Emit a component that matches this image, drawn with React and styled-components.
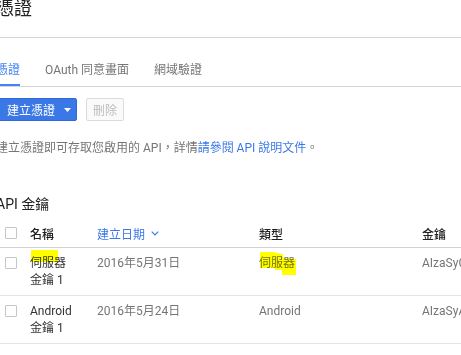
import styled, { createGlobalStyle } from "styled-components";

const GlobalStyle = createGlobalStyle`
  html, body {
    margin: 0;
    padding: 0;
    overflow: hidden;
    background: #fff;
  }
  body {
    font-family: Roboto, "Noto Sans CJK TC", sans-serif;
    font-size: 12px;
    color: #212121;
  }
`;

const rows = [
  {
    id: 1,
    name: "伺服器",
    date: "2016年5月31日",
    type: "伺服器",
    key: "AIzaSyC3kR8vQp1xLm0Zt7uWb2nYd5eHf9gJ4sA",
    marked: true,
  },
  {
    id: 2,
    name: "Android",
    date: "2016年5月24日",
    type: "Android",
    key: "AIzaSyAq7Lw2Xn9cVb4Tz1Mk8Ps0Rj6Hd3Fg5Ue",
    marked: false,
  },
];

export default function App() {
  return (
    <>
      <GlobalStyle />
      <Page>
        <Header>
          <Title>憑證</Title>
        </Header>

        <TabBar>
          <Tab $active>憑證</Tab>
          <Tab>OAuth 同意畫面</Tab>
          <Tab>網域驗證</Tab>
        </TabBar>

        <Toolbar>
          <PrimaryButton>
            建立憑證
            <svg width="7" height="4" viewBox="0 0 7 4">
              <path d="M0 0 L7 0 L3.5 4 Z" fill="#fff" />
            </svg>
          </PrimaryButton>
          <GhostButton disabled>刪除</GhostButton>
        </Toolbar>

        <Description>
          建立憑證即可存取您啟用的 API，詳情<DocLink>請參閱 API 說明文件</DocLink>。
        </Description>

        <SectionTitle>API 金鑰</SectionTitle>

        <Table>
          <HeadRow>
            <CheckCell>
              <Checkbox />
            </CheckCell>
            <HeadCell>名稱</HeadCell>
            <HeadCell $sort>
              建立日期
              <svg width="8" height="5" viewBox="0 0 8 5">
                <path d="M0.7 0.7 L4 4 L7.3 0.7" fill="none" stroke="#3b78e7" strokeWidth="1.2" />
              </svg>
            </HeadCell>
            <HeadCell>類型</HeadCell>
            <HeadCell>金鑰</HeadCell>
          </HeadRow>

          {rows.map((row) => (
            <Row key={row.id}>
              <CheckCell $top>
                <Checkbox />
              </CheckCell>
              <NameCell>
                {row.marked && <NameMark />}
                <div>{row.name}</div>
                <div>金鑰 1</div>
              </NameCell>
              <Cell>{row.date}</Cell>
              <Cell>
                {row.marked && (
                  <TypeMark width="37" height="24" viewBox="0 0 37 24">
                    <path
                      d="M0 0 L15 0 L16 1 L23 2 L23 6 L36 7 L36 23 L22 23 L22 18 L15 18 L15 16 L0 16 Z"
                      fill="#ffff00"
                    />
                  </TypeMark>
                )}
                {row.type}
              </Cell>
              <KeyCell>{row.key}</KeyCell>
            </Row>
          ))}
        </Table>
      </Page>
    </>
  );
}

const Page = styled.div`
  margin-left: -4px;
  width: 480px;
`;

const Header = styled.div`
  height: 37px;
  border-bottom: 1px solid #d6d6d6;
`;

const Title = styled.h1`
  margin: 0;
  font-size: 18px;
  line-height: 18px;
  font-weight: 400;
  color: #212121;
`;

const TabBar = styled.div`
  display: flex;
  align-items: flex-end;
  gap: 25px;
  height: 48px;
  border-bottom: 1px solid #d6d6d6;
`;

const Tab = styled.div`
  line-height: 16px;
  padding-bottom: 6px;
  border-bottom: 2px solid ${(p) => (p.$active ? "#4285f4" : "transparent")};
  color: ${(p) => (p.$active ? "#4285f4" : "#757575")};
  font-size: 12px;
`;

const Toolbar = styled.div`
  display: flex;
  gap: 9px;
  margin-top: 11px;
`;

const PrimaryButton = styled.button`
  display: flex;
  align-items: center;
  gap: 9px;
  height: 23px;
  width: 81px;
  padding: 0 0 0 10px;
  border: 1px solid #3367d6;
  border-radius: 2px;
  background: #3b78e7;
  color: #fff;
  font: inherit;
  font-size: 12px;
`;

const GhostButton = styled.button`
  height: 23px;
  width: 38px;
  padding: 0;
  border: 1px solid #dcdcdc;
  border-radius: 2px;
  background: #fafafa;
  color: #bdbdbd;
  font: inherit;
  font-size: 12px;
`;

const Description = styled.p`
  margin: 19px 0 0;
  line-height: 16px;
  color: #757575;
  white-space: nowrap;
`;

const DocLink = styled.a`
  color: #3b78e7;
  text-decoration: none;
`;

const SectionTitle = styled.h2`
  margin: 38px 0 0;
  font-size: 14px;
  line-height: 20px;
  font-weight: 400;
  color: #212121;
`;

const Table = styled.div`
  margin-top: 5px;
`;

const columns = "34px 67px 162px 163px 1fr";

const HeadRow = styled.div`
  display: grid;
  grid-template-columns: ${columns};
  align-items: center;
  height: 28px;
  border-bottom: 1px solid #d2d2d2;
`;

const HeadCell = styled.div`
  display: flex;
  align-items: center;
  gap: 6px;
  color: ${(p) => (p.$sort ? "#3b78e7" : "#212121")};
  font-weight: ${(p) => (p.$sort ? 400 : 500)};
  white-space: nowrap;
`;

const Row = styled.div`
  display: grid;
  grid-template-columns: ${columns};
  align-items: start;
  height: 47px;
  border-bottom: 1px solid #e4e4e4;
`;

const CheckCell = styled.div`
  padding-left: 9px;
  padding-top: ${(p) => (p.$top ? "9px" : "0")};
  display: flex;
`;

const Checkbox = styled.span`
  display: block;
  width: 10px;
  height: 10px;
  border: 1px solid #c6c6c6;
  border-radius: 1px;
  background: #fff;
`;

const Cell = styled.div`
  position: relative;
  padding-top: 7px;
  line-height: 17px;
  color: #757575;
  white-space: nowrap;
`;

const NameCell = styled(Cell)`
  color: #333;
`;

const KeyCell = styled(Cell)`
  overflow: hidden;
`;

const NameMark = styled.span`
  position: absolute;
  left: 1px;
  top: 2px;
  width: 27px;
  height: 12px;
  background: #ffff00;
  mix-blend-mode: multiply;
`;

const TypeMark = styled.svg`
  position: absolute;
  left: 1px;
  top: 4px;
  mix-blend-mode: multiply;
`;
